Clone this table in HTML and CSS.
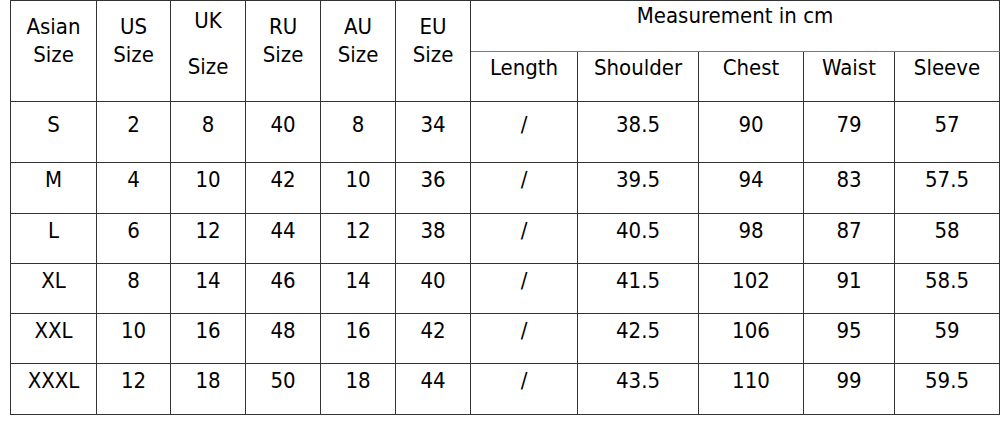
FILE: index.html
```html
<!DOCTYPE html>
<html>
<head>
<meta charset="utf-8">
<link rel="stylesheet" href="styles.css">
</head>
<body>
<table class="size-table">
  <colgroup>
    <col class="c86"><col class="c74"><col class="c75"><col class="c75"><col class="c75"><col class="c75">
    <col class="c107"><col class="c121"><col class="c105"><col class="c91"><col class="c105">
  </colgroup>
  <tr class="h1">
    <td rowspan="2" class="hd">Asian<br>Size</td>
    <td rowspan="2" class="hd">US<br>Size</td>
    <td rowspan="2" class="hd uk"><div class="uk-top">UK</div><div class="uk-bot">Size</div></td>
    <td rowspan="2" class="hd">RU<br>Size</td>
    <td rowspan="2" class="hd">AU<br>Size</td>
    <td rowspan="2" class="hd">EU<br>Size</td>
    <td colspan="5" class="meas">Measurement in cm</td>
  </tr>
  <tr class="h2">
    <td>Length</td><td>Shoulder</td><td>Chest</td><td>Waist</td><td>Sleeve</td>
  </tr>
  <tr class="r first"><td>S</td><td>2</td><td>8</td><td>40</td><td>8</td><td>34</td><td>/</td><td>38.5</td><td>90</td><td>79</td><td>57</td></tr>
  <tr class="r r51"><td>M</td><td>4</td><td>10</td><td>42</td><td>10</td><td>36</td><td>/</td><td>39.5</td><td>94</td><td>83</td><td>57.5</td></tr>
  <tr class="r"><td>L</td><td>6</td><td>12</td><td>44</td><td>12</td><td>38</td><td>/</td><td>40.5</td><td>98</td><td>87</td><td>58</td></tr>
  <tr class="r"><td>XL</td><td>8</td><td>14</td><td>46</td><td>14</td><td>40</td><td>/</td><td>41.5</td><td>102</td><td>91</td><td>58.5</td></tr>
  <tr class="r"><td>XXL</td><td>10</td><td>16</td><td>48</td><td>16</td><td>42</td><td>/</td><td>42.5</td><td>106</td><td>95</td><td>59</td></tr>
  <tr class="r r51"><td>XXXL</td><td>12</td><td>18</td><td>50</td><td>18</td><td>44</td><td>/</td><td>43.5</td><td>110</td><td>99</td><td>59.5</td></tr>
</table>
</body>
</html>
```
FILE: styles.css
```css
html, body {
  margin: 0;
  padding: 0;
  background: #ffffff;
}
body {
  padding-left: 10px;
}
.size-table {
  border-collapse: collapse;
  table-layout: fixed;
  width: 990px;
  font-family: "DejaVu Sans Condensed", "DejaVu Sans", sans-serif;
  font-stretch: condensed;
  font-size: 22px;
  line-height: 28px;
  color: #000000;
}
.c86 { width: 86px; }
.c74 { width: 74px; }
.c75 { width: 75px; }
.c107 { width: 107px; }
.c121 { width: 121px; }
.c105 { width: 105px; }
.c91 { width: 91px; }
.size-table td {
  border: 1px solid #333333;
  text-align: center;
  vertical-align: top;
  padding: 3px 0 0 0;
  box-sizing: border-box;
}
.h1 { height: 51px; }
.h2 { height: 50px; }
.h1 td.hd { padding-top: 12px; }
.h1 td.meas { padding-top: 1px; border-bottom-color: #7a7a7a; }
.h2 td { padding-top: 2px; }
.uk-top { line-height: 28px; margin-top: -6px; }
.uk-bot { margin-top: 18px; }
.r { height: 50px; }
.r51 { height: 51px; }
.r.first { height: 61px; }
.r.first td { padding-top: 9px; }
```
